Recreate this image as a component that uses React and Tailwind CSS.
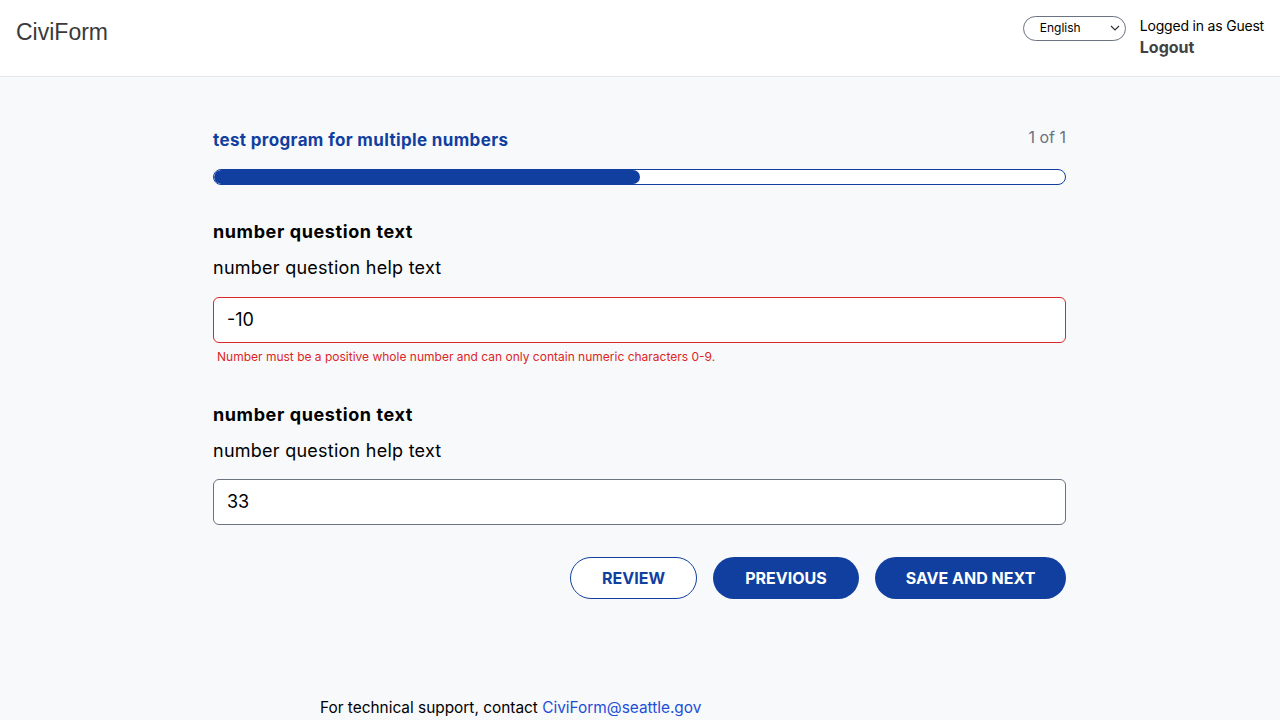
export default function App() {
  return (
    <div className="min-h-[720px] bg-[#f8f9fb] text-black" style={{ fontFamily: "Inter, 'Noto Sans', sans-serif" }}>
      <header className="h-[77px] bg-white border-b border-[#e5e7eb] flex items-center justify-between pl-4 pr-4">
        <div className="text-[23px] text-[#3a3a3a] -mt-[12px]" style={{ fontFamily: "'Liberation Sans', Arial, sans-serif" }}>CiviForm</div>
        <div className="flex items-start gap-[14px] -mt-[4px]">
          <div className="relative mt-[2px] w-[103px] h-[25px] rounded-full border border-[#6b7280] bg-white flex items-center pl-[16px] text-[12px]">
            English
            <svg className="absolute right-[5px] top-[8px]" width="10" height="7" viewBox="0 0 10 7"><path d="M1 1l4 4 4-4" fill="none" stroke="#333" strokeWidth="1.2" /></svg>
          </div>
          <div className="flex flex-col mt-[2px]">
            <span className="text-[14px] leading-[20px] tracking-[-0.2px]">Logged in as Guest</span>
            <span className="text-[16px] font-bold text-[#424242] leading-[24px] mt-[-1px]">Logout</span>
          </div>
        </div>
      </header>
      <main className="w-[853px] ml-[213px] pt-[50px]">
        <div className="flex justify-between items-start">
          <div className="text-[17px] font-bold text-[#113f9f] mt-[1px] tracking-[0.36px]">test program for multiple numbers</div>
          <div className="text-[16px] text-[#6b7280] -mt-[2px]">1 of 1</div>
        </div>
        <div className="mt-[15px] h-[16px] rounded-full border border-[#113f9f] bg-white overflow-hidden">
          <div className="h-full w-[50%] bg-[#113f9f] rounded-full"></div>
        </div>
        <div className="mt-[35px] text-[18px] font-bold leading-[24px] tracking-[0.6px]">number question text</div>
        <div className="mt-[12px] text-[18px] leading-[24px] tracking-[0.25px]">number question help text</div>
        <div className="mt-[17px] h-[46px] rounded-[6px] border border-[#dc2626] bg-white flex items-center pl-[13px] text-[18px]">-10</div>
        <div className="mt-[5px] ml-[4px] text-[12px] text-[#dc2626]">Number must be a positive whole number and can only contain numeric characters 0-9.</div>
        <div className="mt-[37px] text-[18px] font-bold leading-[24px] tracking-[0.6px]">number question text</div>
        <div className="mt-[12px] text-[18px] leading-[24px] tracking-[0.25px]">number question help text</div>
        <div className="mt-[16px] h-[46px] rounded-[6px] border border-[#6b7280] bg-white flex items-center pl-[13px] text-[18px]">33</div>
        <div className="mt-[32px] flex justify-end gap-[16px]">
          <button className="w-[127px] h-[42px] rounded-full border border-[#113f9f] bg-white text-[#113f9f] text-[16px] font-bold">REVIEW</button>
          <button className="w-[146px] h-[42px] rounded-full bg-[#113f9f] text-white text-[16px] font-bold">PREVIOUS</button>
          <button className="w-[191px] h-[42px] rounded-full bg-[#113f9f] text-white text-[16px] font-bold">SAVE AND NEXT</button>
        </div>
      </main>
      <footer className="mt-[97px] pl-[320px] text-[15.4px] leading-[24px]">
        For technical support, contact <span className="text-[#1d4ed8]">CiviForm@seattle.gov</span>
      </footer>
    </div>
  );
}
